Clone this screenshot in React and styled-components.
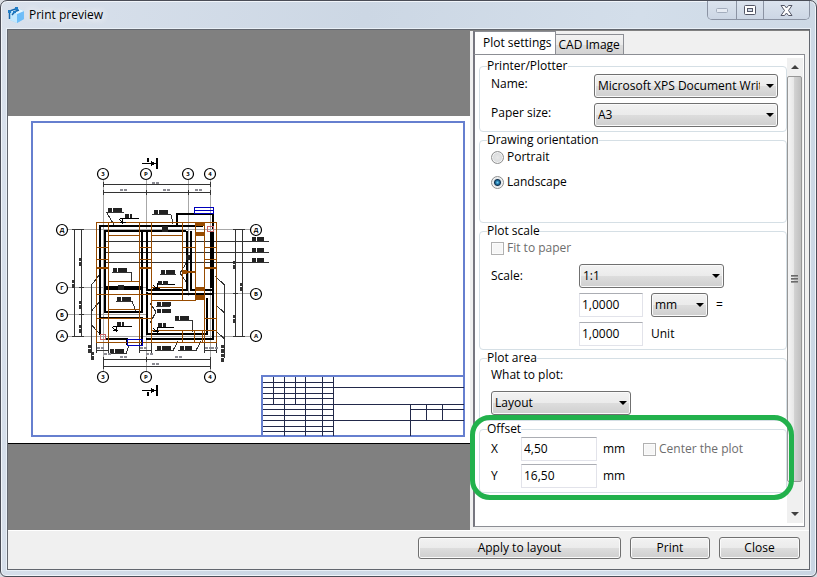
import React, { useState } from "react";
import styled, { createGlobalStyle, css } from "styled-components";

const FONT = `"Open Sans", "Noto Sans", "Liberation Sans", sans-serif`;

const tabs = ["Plot settings", "CAD Image"];

const bubbles = [
  [103, 174, "3"],
  [146, 174, "P"],
  [188, 174, "3"],
  [210, 174, "4"],
  [103, 377, "3"],
  [146, 377, "P"],
  [210, 377, "4"],
  [62, 230, "Д"],
  [62, 288, "Г"],
  [62, 315, "Б"],
  [62, 336, "А"],
  [256, 230, "Д"],
  [256, 294, "В"],
  [256, 336, "А"],
];

// [x, y, width] of the small notes on the plan
const notes = [
  [108, 210, 14], [154, 212, 14], [125, 216, 7], [113, 270, 14], [161, 272, 14],
  [117, 299, 14], [117, 324, 7], [158, 283, 10], [157, 304, 14], [157, 311, 14],
  [175, 318, 14], [158, 325, 8], [110, 351, 15], [157, 348, 14], [180, 348, 12],
  [252, 239, 12], [252, 250, 12], [252, 260, 12],
];

const dims = [
  [152, 183], [120, 190], [163, 190], [195, 190], [120, 357], [152, 364],
  [175, 357], [97, 348], [104, 354], [140, 348], [146, 354], [205, 348], [211, 348],
];

const sideNotes = [
  [72, 280], [79, 258], [79, 301], [79, 325], [233, 261], [233, 315], [240, 283],
  [88, 345], [91, 352], [221, 345], [221, 354],
];

function Drawing() {
  return (
    <Paper viewBox="8 116 462 328" role="img" aria-label="Sheet preview">
      <rect x="8" y="116" width="462" height="328" fill="#fff" />
      <path d="M8 443.5H470" stroke="#000" />
      <rect x="32" y="122" width="432" height="314" fill="none" stroke="#667fcf" strokeWidth="2" />
      <g fill="none" stroke="#a8a8a8">
        <path d="M103.5 180V371M146.5 180V371M188.5 180V296M210.5 180V371" />
        <path d="M68 229.5H250M68 287.5H148M68 314.5H148M68 336.5H250M147 293.5H250" />
      </g>
      <g fill="none" stroke="#333">
        <path d="M103 184.5H211M103 192.5H211M103 359.5H211M103 366.5H211M96 350.5H109M139 350.5H152M204 350.5H217" />
        <path d="M74.5 229V337M81.5 229V337M235.5 229V337M242.5 229V337" />
        <path d="M72 229.5H84M79 287.5H84M79 314.5H84M72 336.5H84M233 229.5H245M233 293.5H238M233 336.5H245" />
        <path d="M103.5 182V187M210.5 182V187M103.5 190V195M146.5 190V195M188.5 190V195M210.5 190V195M103.5 357V369M146.5 357V362M210.5 357V369M96.5 343V353M108.5 343V353M139.5 343V353M151.5 343V353M204.5 343V353M216.5 343V353" />
        <path d="M104 241.5H269M104 252.5H269M104 262.5H269" />
        <path d="M106 212.5H124M107 213L114 225M152 214.5H171L173 224M112 272.5H131V282M116 301.5H132L136 311M160 274.5H176M156 306.5H170M175 320.5H192V332M108 353.5H126L129 345M155 350.5H173L178 341M178 350.5H196L201 341" />
        <path d="M100 274L91.5 285V358M100 301L91.5 311M99 333L91.5 325M215 276L224.5 285V358M216 305L224.5 313M216 331L224.5 339" />
        <path d="M187 262L180 273L187 283M150 303L156 312L150 323" />
      </g>
      <g fill="none" stroke="#000" strokeWidth="2">
        <path d="M188 226H100V335M186 231H105V287H142V231M105 289H142V312H105ZM100 318H142V345M105 339H127V345" />
        <path d="M147 231V290H187V231M147 292V334H207V298M146 339H213V266M191 231V290H213M148 294H213M177 225V214H213V229" />
        <path d="M188 226H203" />
      </g>
      <path d="M212 231V288" stroke="#000" strokeWidth="4" />
      <g fill="none" stroke="#974b00">
        <path d="M96.5 222.5H216.5V342.5H96.5Z" />
        <path d="M108.5 222V343M139.5 222V343M151.5 222V343M182.5 222V301M195.5 222V301M204.5 222V343" />
        <path d="M108 235.5H140M151 235.5H183M96 247.5H109M139 247.5H152M96 259.5H109M139 259.5H152M183 247.5H196M204 247.5H217M204 259.5H217M183 271.5H196M108 281.5H140M151 287.5H183M96 294.5H152M151 300.5H196M108 309.5H140M96 318.5H152M204 318.5H217M151 330.5H217M182.5 330V343M194.5 330V343M202.5 330V343" />
        <path d="M96 268H109M139 268H152M204 268H217M183 272H196" strokeWidth="2" />
      </g>
      <g fill="#974b00">
        <rect x="195" y="223" width="9" height="3" />
        <rect x="195" y="232" width="9" height="4" />
        <rect x="195" y="287" width="9" height="4" />
        <rect x="195" y="295" width="9" height="5" />
        <rect x="183" y="270" width="4" height="4" />
      </g>
      <g fill="none" stroke="#0000bb">
        <path d="M194.5 207.5H213.5V213.5H194.5ZM194 210.5H213M127.5 339.5H142.5V345.5H127.5Z" />
      </g>
      <path d="M100.5 334.5H105.5V339.5H100.5ZM207.5 226.5H213.5V231.5H207.5Z" fill="none" stroke="#c96464" />
      <g fill="#222">
        <rect x="162" y="226" width="6" height="6" />
        <rect x="118" y="285" width="6" height="5" />
        <rect x="186" y="255" width="4" height="5" />
      </g>
      <g fill="none" stroke="#000">
        <path d="M120 218.5H139M120 222.5H126M122.5 218V223L119 219M113 326.5H132M113 330.5H118M116.5 326V331L112 327M157 284.5H175M153 288.5H160M157.5 283V289L153 285M157 327.5H174M153 331.5H159M157.5 327V332L153 328" />
        <path d="M142 163.5H157M142 390.5H157" />
      </g>
      <path d="M157 158V169M157 385V396" stroke="#000" strokeWidth="2" />
      <path d="M151 161L156 163.5L151 166ZM151 388L156 390.5L151 393ZM147 158H149V162H147ZM147 392H149V396H147Z" />
      <g stroke="#222" strokeWidth="4" strokeDasharray="4 1 5 0">
        {notes.map(([x, y, w]) => (
          <path d={`M${x} ${y}h${w}`} key={`${x}-${y}`} />
        ))}
      </g>
      <g stroke="#333" strokeWidth="3" strokeDasharray="3 1 4 0">
        {sideNotes.map(([x, y]) => (
          <path d={`M${x + 1.5} ${y}v8`} key={`${x}-${y}`} />
        ))}
      </g>
      <g strokeWidth="2" stroke="#8c8c94" strokeDasharray="3 1">
        {dims.map(([x, y]) => (
          <path d={`M${x} ${y}h7`} key={`${x}-${y}`} />
        ))}
      </g>
      {bubbles.map(([x, y, name]) => (
        <g key={`${x}-${y}`}>
          <Bubble cx={x} cy={y} r="5.5" />
          <BubbleText x={x} y={y + 2}>
            {name}
          </BubbleText>
        </g>
      ))}
      <g fill="none" stroke="#22294a">
        <path d="M273.5 376V404M295.5 376V404M284.5 376V436M305.5 376V436M322.5 376V436M333.5 376V436" />
        <path d="M262 382.5H334M262 387.5H464M262 393.5H334M262 398.5H334M262 404.5H464M262 409.5H334M262 415.5H334M262 420.5H464M262 426.5H334M262 431.5H334" />
        <path d="M410.5 404V436M426.5 404V420M442.5 404V420M410 409.5H464" />
      </g>
      <path d="M262 436V376H464" fill="none" stroke="#667fcf" strokeWidth="2" />
    </Paper>
  );
}

function Select({ label, options, ...rest }) {
  return (
    <SelectBox {...rest}>
      <select aria-label={label}>
        {options.map((one) => (
          <option key={one}>{one}</option>
        ))}
      </select>
    </SelectBox>
  );
}

function PlotSettings() {
  const [orientation, setOrientation] = useState("Landscape");
  return (
    <Groups>
      <Group $bottom={4}>
        <legend>Printer/Plotter</legend>
        <Rows $gap={5}>
          <Spread>
            <RowLabel>Name:</RowLabel>
            <Select label="Name" options={["Microsoft XPS Document Writer"]} $width={184} />
          </Spread>
          <Spread>
            <RowLabel>Paper size:</RowLabel>
            <Select label="Paper size" options={["A3", "A4"]} $width={184} />
          </Spread>
        </Rows>
      </Group>
      <Group $bottom={31}>
        <legend>Drawing orientation</legend>
        <Rows $gap={7}>
          {["Portrait", "Landscape"].map((one) => (
            <Option key={one}>
              <Radio
                name="orientation"
                checked={orientation === one}
                onChange={() => setOrientation(one)}
              />
              {one}
            </Option>
          ))}
        </Rows>
      </Group>
      <Group>
        <legend>Plot scale</legend>
        <Rows $gap={7}>
          <Option $disabled>
            <Checkbox disabled />
            Fit to paper
          </Option>
          <ScaleGrid>
            <span>Scale:</span>
            <Select label="Scale" options={["1:1", "1:2"]} $width={145} />
            <ScaleLine>
              <Field aria-label="Paper units" defaultValue="1,0000" $width={64} />
              <Select label="Units" options={["mm", "inch"]} $width={57} />
              <span>=</span>
            </ScaleLine>
            <ScaleLine>
              <Field id="unit" defaultValue="1,0000" $width={64} />
              <label htmlFor="unit">Unit</label>
            </ScaleLine>
          </ScaleGrid>
        </Rows>
      </Group>
      <Group $bottom={5}>
        <legend>Plot area</legend>
        <Rows $gap={7}>
          <Option as="span">What to plot:</Option>
          <Select label="What to plot" options={["Layout", "Extents"]} $width={140} />
        </Rows>
      </Group>
      <Marked>
        <Group $bottom={4}>
          <legend>Offset</legend>
          <Rows $gap={3}>
            <OffsetLine>
              <label htmlFor="x">X</label>
              <Field id="x" defaultValue="4,50" $width={76} />
              <span>mm</span>
              <Option $disabled>
                <Checkbox disabled />
                Center the plot
              </Option>
            </OffsetLine>
            <OffsetLine>
              <label htmlFor="y">Y</label>
              <Field id="y" defaultValue="16,50" $width={76} />
              <span>mm</span>
            </OffsetLine>
          </Rows>
        </Group>
      </Marked>
    </Groups>
  );
}

function App() {
  const [tab, setTab] = useState(0);
  return (
    <Window>
      <GlobalStyle />
      <TitleBar>
        <svg width="17" height="17" viewBox="0 0 17 17" aria-hidden="true">
          <path d="M2 4L9 1L16 4V12L9 16L2 13Z" fill="#8fd0fb" />
          <path d="M2 5L9 7V16L2 13Z" fill="#c4e8fd" />
          <path d="M9 7L16 4V12L9 16Z" fill="#6dbdf8" />
          <path d="M2 4L9 1L16 4L9 7Z" fill="#e4f5ff" />
          <path d="M1.500 12V4L9 1.500M4 8L7 4.500L11 3" fill="none" stroke="#1767ab" strokeWidth="1.500" />
          <path d="M0 3H3V6H0ZM7 0H10V3H7ZM5 4H8V6H5Z" fill="#1f7cc6" />
        </svg>
        <h1>Print preview</h1>
        <Controls>
          <Control $width={28} aria-label="Minimize" disabled>
            <svg width="12" height="5">
              <rect x="0.5" y="0.5" width="11" height="4" rx="1" fill="#e6ebf3" stroke="#a3adbd" />
            </svg>
          </Control>
          <Control $width={27} aria-label="Maximize">
            <svg width="12" height="10">
              <rect x="0.5" y="0.5" width="11" height="9" rx="1" fill="#fff" stroke="#535666" />
              <rect x="3.5" y="3.5" width="5" height="3" fill="#cfd8e6" stroke="#535666" />
            </svg>
          </Control>
          <Control $width={46} aria-label="Close window">
            <svg width="13" height="11" viewBox="0 0 13 11">
              <path
                d="M1 .5H4.500L6.500 3L8.500 .5H12L8.500 5.500L12 10.500H8.500L6.500 8L4.500 10.500H1L4.500 5.500Z"
                fill="#fff"
                stroke="#535666"
              />
            </svg>
          </Control>
        </Controls>
      </TitleBar>
      <Client>
        <Main>
          <Preview>
            <Drawing />
          </Preview>
          <Side>
            <TabList role="tablist">
              {tabs.map((one, index) => (
                <Tab
                  role="tab"
                  aria-selected={tab === index}
                  $active={tab === index}
                  onClick={() => setTab(index)}
                  key={one}
                >
                  {one}
                </Tab>
              ))}
            </TabList>
            <Page>
              {tab === 0 ? <PlotSettings /> : <Groups />}
              <ScrollBar>
                <ScrollButton aria-label="Scroll up" $up />
                <Track>
                  <Thumb>
                    <i />
                    <i />
                    <i />
                  </Thumb>
                </Track>
                <ScrollButton aria-label="Scroll down" />
              </ScrollBar>
            </Page>
          </Side>
        </Main>
        <Footer>
          <Button $width={203}>Apply to layout</Button>
          <Button $width={80}>Print</Button>
          <Button $width={81}>Close</Button>
        </Footer>
      </Client>
    </Window>
  );
}

export default App;

const GlobalStyle = createGlobalStyle`
  * {
    box-sizing: border-box;
  }
  body {
    margin: 0;
    background-color: #d9dde3;
    color: #000;
    font: 12px/16px ${FONT};
  }
  button, input, select {
    margin: 0;
    color: inherit;
    font: inherit;
  }
`;

const face = css`
  border: 1px solid #707070;
  border-radius: 3px;
  background: linear-gradient(#f2f2f2, #ebebeb 49%, #dddddd 50%, #cfcfcf);
  box-shadow: inset 0 0 0 1px #fafafa;
`;

const Window = styled.div`
  display: flex;
  flex-direction: column;
  min-height: 100vh;
  padding: 0 6px 6px;
  border: 1px solid #4a4d57;
  border-radius: 7px 7px 6px 6px;
  background: linear-gradient(100deg, #d9e1ec, #ccd7e4 40%, #d3deea 70%, #cad6e3);
  box-shadow: inset 0 0 0 1px #f1f5fa;
`;
const TitleBar = styled.header`
  display: flex;
  align-items: center;
  height: 28px;
  padding-left: 1px;
  h1 {
    flex: 1;
    margin: 0;
    padding-left: 4px;
    font-size: 12px;
    font-weight: 400;
    text-shadow: 0 0 8px #fff, 0 0 8px #fff;
  }
`;
const Controls = styled.div`
  display: flex;
  align-self: flex-start;
  border: 1px solid #8b93a3;
  border-top: 0;
  border-radius: 0 0 5px 5px;
  overflow: hidden;
`;
const Control = styled.button`
  display: flex;
  align-items: center;
  justify-content: center;
  width: ${({ $width }) => $width}px;
  height: 18px;
  padding: 0;
  border: 0;
  background: linear-gradient(#dbe3ee, #ccd6e4);
  & + & {
    border-left: 1px solid #8b93a3;
  }
`;
const Client = styled.div`
  display: flex;
  flex: 1;
  flex-direction: column;
  border: 1px solid #62666e;
  background-color: #f0f0f0;
  outline: 1px solid #e9f0f7;
`;
const Main = styled.main`
  display: flex;
  flex: 1;
  border-bottom: 1px solid #fff;
`;
const Preview = styled.section`
  display: flex;
  flex: 1;
  align-items: center;
  min-width: 0;
  background-color: #808080;
`;
const Paper = styled.svg`
  display: block;
  width: 100%;
  shape-rendering: crispEdges;
`;
const Bubble = styled.circle`
  fill: #fff;
  stroke: #000;
  stroke-width: 1.2;
  shape-rendering: geometricPrecision;
`;
const BubbleText = styled.text`
  font: bold 6px ${FONT};
  text-anchor: middle;
`;
const Side = styled.section`
  display: flex;
  flex-direction: column;
  width: 339px;
  padding: 0 4px 3px 3px;
  border-top: 1px solid #808080;
`;
const TabList = styled.div`
  display: flex;
  align-items: flex-end;
  height: 23px;
  border-left: 2px solid #777780;
`;
const Tab = styled.button`
  height: ${({ $active }) => ($active ? 23 : 20)}px;
  padding: ${({ $active }) => ($active ? "0 3px 0 8px" : "0 3px")};
  border: 1px solid #8c8e94;
  border-width: 1px 1px 0 0;
  background: ${({ $active }) => ($active ? "#fff" : "linear-gradient(#f2f2f2, #ebebeb 50%, #dddddd 51%, #d3d3d3)")};
  white-space: nowrap;
`;
const Page = styled.div`
  display: flex;
  flex: 1;
  padding: 3px 1px 3px 4px;
  border: 1px solid #8c8e94;
  border-left: 2px solid #777780;
  background-color: #fff;
`;
const Groups = styled.div`
  flex: 1;
  min-width: 0;
`;
const Group = styled.fieldset`
  min-width: 0;
  margin: 0;
  padding: 0 8px ${({ $bottom = 3 }) => $bottom}px 7px;
  border: 1px solid #d5dfe5;
  border-radius: 4px;
  legend {
    padding: 0;
    line-height: 16px;
  }
`;
const Rows = styled.div`
  display: flex;
  flex-direction: column;
  gap: ${({ $gap }) => $gap}px;
  padding-left: 4px;
`;
const Spread = styled.div`
  display: flex;
  justify-content: space-between;
`;
const RowLabel = styled.span`
  line-height: 20px;
`;
const Option = styled.label`
  display: flex;
  align-items: center;
  gap: 3px;
  height: 18px;
  color: ${({ $disabled }) => ($disabled ? "#6d6d6d" : "#000")};
`;
const Radio = styled.input.attrs({ type: "radio" })`
  appearance: none;
  width: 13px;
  height: 13px;
  border: 1px solid #8e8f8f;
  border-radius: 50%;
  background: radial-gradient(#e8e8e8, #cfd2d5);
  box-shadow: inset 0 0 0 1px #f4f4f4;
  &:checked {
    background: radial-gradient(circle at 50% 50%, #6fd0f5 0, #1b6b9c 2px, #12334f 3px, #e2e6e9 4px);
  }
`;
const Checkbox = styled.input.attrs({ type: "checkbox" })`
  appearance: none;
  width: 13px;
  height: 13px;
  border: 1px solid #b1b1b1;
  background-color: #f6f6f6;
  box-shadow: inset 0 0 0 1px #fbfbfb;
`;
const SelectBox = styled.div`
  position: relative;
  width: ${({ $width }) => $width}px;
  height: 24px;
  select {
    ${face}
    appearance: none;
    display: block;
    width: 100%;
    height: 100%;
    padding: 0 17px 0 3px;
  }
  &::after {
    content: "";
    position: absolute;
    top: 10px;
    right: 4px;
    border: 4px solid transparent;
    border-top-color: #000;
    border-bottom: 0;
    pointer-events: none;
  }
`;
const Field = styled.input.attrs({ type: "text" })`
  width: ${({ $width }) => $width}px;
  height: 24px;
  padding: 0 2px 2px;
  border: 1px solid #e2e3ea;
  border-top-color: #abadb3;
  background-color: #fff;
`;
const ScaleGrid = styled.div`
  display: grid;
  grid-template-columns: 88px 1fr;
  row-gap: 5px;
  align-items: center;
`;
const ScaleLine = styled.div`
  display: flex;
  grid-column: 2;
  align-items: center;
  gap: 8px;
`;
const OffsetLine = styled.div`
  display: grid;
  grid-template-columns: 30px 76px 46px 1fr;
  align-items: center;
  > span {
    padding-left: 6px;
  }
`;
const Marked = styled.div`
  position: relative;
  z-index: 1;
  &::after {
    content: "";
    position: absolute;
    inset: -6px -7px -7px -9px;
    border: 5px solid #22b14c;
    border-radius: 20px;
    pointer-events: none;
  }
`;
const ScrollBar = styled.div`
  display: flex;
  flex-direction: column;
  width: 16px;
  background-color: #f0f0f0;
`;
const ScrollButton = styled.button`
  display: flex;
  align-items: center;
  justify-content: center;
  height: 18px;
  padding: 0;
  border: 0;
  background-color: #f0f0f0;
  &::before {
    content: "";
    border: 4px solid transparent;
    border-${({ $up }) => ($up ? "bottom" : "top")}-color: #404040;
    border-${({ $up }) => ($up ? "top" : "bottom")}: 0;
  }
`;
const Track = styled.div`
  display: flex;
  flex: 1;
  padding-bottom: 23px;
`;
const Thumb = styled.div`
  display: flex;
  flex-direction: column;
  align-items: center;
  justify-content: center;
  gap: 1px;
  width: 15px;
  border: 1px solid #979797;
  border-radius: 2px;
  background: linear-gradient(90deg, #f5f5f5, #e6e6e6 49%, #d2d2d2 50%, #bfbfbf);
  i {
    width: 7px;
    height: 2px;
    background: linear-gradient(#555, #aaa);
  }
`;
const Footer = styled.footer`
  display: flex;
  justify-content: flex-end;
  gap: 9px;
  height: 38px;
  padding: 6px 9px 0;
`;
const Button = styled.button`
  ${face}
  width: ${({ $width }) => $width}px;
  height: 22px;
  padding: 0;
`;
